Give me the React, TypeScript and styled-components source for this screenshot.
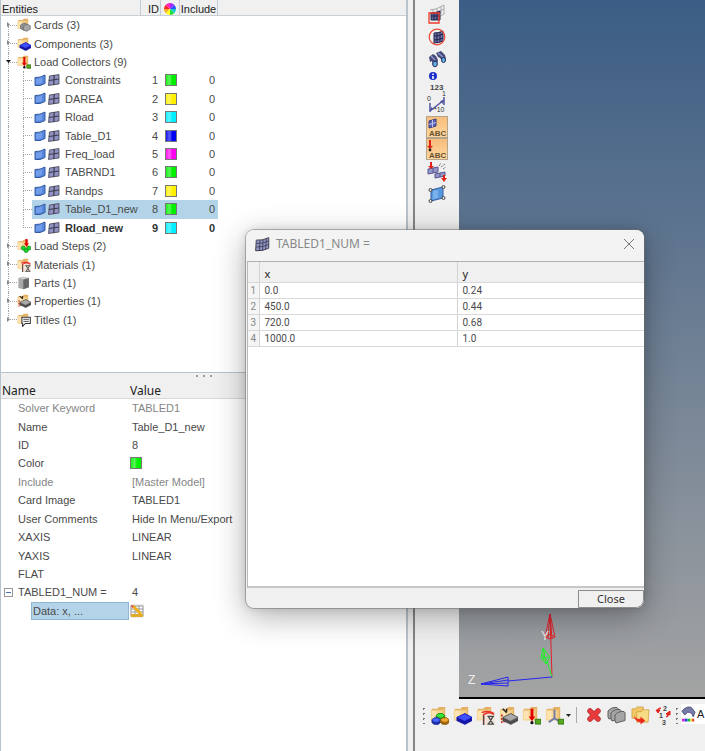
import React from "react";
import styled, { createGlobalStyle, css } from "styled-components";

const GlobalStyle = createGlobalStyle`
  *, *::before, *::after { box-sizing: border-box; }
  body { margin: 0; background: #f0f0f0; color: #4a4a4a; font: 11px/16px "Liberation Sans", Arial, sans-serif; }
  button, input { font: inherit; color: inherit; }
`;

const edge = "#b9c3cb";

/* ---------- window frame ---------- */
const Window = styled.div`
  position: relative;
  display: flex;
  min-height: 100vh;
  overflow: hidden;
`;
const Sidebar = styled.aside`
  flex: 0 0 408px;
  display: flex;
  flex-direction: column;
  border-left: 1px solid ${edge};
  border-right: 2px solid ${edge};
  background: #fff;
`;
const SplitBar = styled.div`
  flex: 0 0 7px;
  background: #f0f0f0;
  border-right: 2px solid #858585;
`;
const Main = styled.main`
  flex: 1;
  min-width: 0;
  display: flex;
  flex-direction: column;
`;
const Workspace = styled.div`
  flex: 1;
  display: flex;
`;

/* ---------- entity browser ---------- */
const EntityPanel = styled.section`
  flex: 0 0 373px;
  border-bottom: 1px solid ${edge};
`;
const EntityTable = styled.table`
  display: block;
  border-spacing: 0;
`;
const entityGrid = css`
  display: grid;
  grid-template-columns: 140px 20px 19px 38px 1fr;
`;
const EntityHead = styled.thead`
  display: block;
  background: #f0f0f0;
  border-bottom: 1px solid #c8cfd5;
`;
const EntityHeadRow = styled.tr`
  ${entityGrid}
  height: 15px;
`;
const HeadCell = styled.th<{ $align?: string }>`
  display: flex;
  align-items: center;
  justify-content: ${(p) => p.$align ?? "center"};
  padding: 2px 1px 0;
  border-right: 1px solid #c4ccd3;
  font-weight: 400;
  line-height: 14px;
  color: #222;
  &:last-child { border: 0; }
`;
const EntityBody = styled.tbody`
  display: grid;
  grid-auto-rows: 1fr;
  height: 313px;
`;
const EntityRow = styled.tr<{ $bold?: boolean }>`
  ${entityGrid}
  font-weight: ${(p) => (p.$bold ? 700 : 400)};
  color: ${(p) => (p.$bold ? "#333" : "#4a4a4a")};
`;
const NameCell = styled.td`
  display: flex;
  padding: 0;
  white-space: nowrap;
`;
const Guide = styled.span<{ $indent: number; $line: number }>`
  position: relative;
  flex: 0 0 ${(p) => p.$line}px;
  margin-left: ${(p) => p.$indent}px;
  display: flex;
  flex-direction: column;
`;
const Half = styled.span<{ $on: boolean; $arm?: boolean }>`
  flex: 1;
  border-left: 1px ${(p) => (p.$on ? "dotted" : "none")} #a4a4a4;
  border-bottom: ${(p) => (p.$arm ? "1px dotted #a4a4a4" : "none")};
`;
const Twisty = styled.svg`
  position: absolute;
  left: -2px;
  top: 6px;
  width: 5px;
  height: 5px;
`;
const Fill = styled.span<{ $selected?: boolean; $child?: boolean }>`
  flex: 1;
  display: flex;
  align-items: center;
  gap: ${(p) => (p.$child ? 2 : 3)}px;
  padding-left: ${(p) => (p.$child ? 2 : 0)}px;
  background: ${(p) => (p.$selected ? "#b3d4e8" : "transparent")};
`;
const Label = styled.span<{ $child?: boolean }>`
  padding-left: ${(p) => (p.$child ? 3 : 0)}px;
`;
const ValueCell = styled.td<{ $selected?: boolean }>`
  display: flex;
  align-items: center;
  justify-content: flex-end;
  padding: 0 3px 0 0;
  background: ${(p) => (p.$selected ? "#b3d4e8" : "transparent")};
`;
const Swatch = styled.span<{ $color: string }>`
  width: 12px;
  height: 12px;
  border: 1px solid #777;
  background: linear-gradient(90deg, rgba(255, 255, 255, 0.1), rgba(255, 255, 255, 0.35) 35%, rgba(255, 255, 255, 0) 65%), ${(p) => p.$color};
`;

/* ---------- property editor ---------- */
const Splitter = styled.div`
  flex: 0 0 10px;
  display: flex;
  justify-content: center;
  gap: 5px;
  padding-top: 2px;
  background: #f0f0f0;
`;
const Dot = styled.i`
  width: 2px;
  height: 2px;
  background: #999;
`;
const PropertyTable = styled.table`
  display: block;
  border-spacing: 0;
`;
const propertyGrid = css`
  display: grid;
  grid-template-columns: 128px 1fr;
`;
const PropertyHead = styled.thead`
  display: block;
  background: #f0f0f0;
  border-bottom: 1px solid #d8d8d8;
`;
const PropertyHeadRow = styled.tr`
  ${propertyGrid}
  height: 15px;
`;
const PropertyHeadCell = styled.th`
  padding: 0 1px;
  font: 400 12px/15px "Noto Sans", sans-serif;
  text-align: left;
  color: #222;
`;
const PropertyBody = styled.tbody`
  display: grid;
  grid-auto-rows: 1fr;
  height: 221px;
`;
const PropertyRow = styled.tr<{ $muted?: boolean }>`
  ${propertyGrid}
  color: ${(p) => (p.$muted ? "#858585" : "#4a4a4a")};
`;
const PropertyName = styled.th`
  display: flex;
  align-items: center;
  padding: 0 0 0 17px;
  font-weight: 400;
  white-space: nowrap;
`;
const PropertyValue = styled.td<{ $art?: boolean }>`
  display: flex;
  align-items: center;
  padding: 0 0 0 ${(p) => (p.$art ? 1 : 3)}px;
`;
const CollapseButton = styled.button`
  flex: 0 0 9px;
  height: 9px;
  display: grid;
  place-items: center;
  margin: 0 5px 0 -14px;
  padding: 0;
  border: 1px solid #999;
  background: #fff;
  &::after { content: ""; width: 5px; height: 1px; background: #4b6eaf; }
`;
const DataField = styled.span`
  flex: 1;
  align-self: stretch;
  display: flex;
  align-items: center;
  margin-left: 13px;
  padding-left: 1px;
  border: 1px solid #8fb7d3;
  background: #b3d4e8;
`;
const IconButton = styled.button`
  display: grid;
  place-items: center;
  padding: 0;
  border: 0;
  background: #ededed;
`;

/* ---------- tool bars and viewport ---------- */
const SideTools = styled.nav`
  flex: 0 0 44px;
  display: grid;
  grid-auto-rows: 1fr;
  justify-items: center;
  align-self: flex-start;
  height: 203px;
  margin-top: 3px;
`;
const ToolButton = styled.button<{ $active?: boolean }>`
  flex: 0 0 22px;
  display: grid;
  place-items: center;
  width: 22px;
  height: 22px;
  padding: 0;
  border: 1px solid ${(p) => (p.$active ? "#b5a48c" : "transparent")};
  background: ${(p) => (p.$active ? "linear-gradient(#f7bd7b, #fdd79e)" : "transparent")};
`;
const Viewport = styled.section`
  flex: 1;
  min-width: 0;
  display: flex;
  align-items: flex-end;
  border-bottom: 2px solid #000;
  background: linear-gradient(#3b5d85, #a3a3a3);
`;
const BottomTools = styled.nav`
  flex: 0 0 52px;
  display: flex;
  align-items: flex-start;
  padding: 5px 0 0 6px;
  overflow: hidden;
`;
const ToolGroup = styled.div<{ $gap: number }>`
  flex: none;
  display: flex;
  gap: ${(p) => p.$gap}px;
`;
const Grip = styled.span`
  flex: 0 0 5px;
  height: 18px;
  margin: 2px 2px 0 0;
  background: radial-gradient(circle, #777 1px, transparent 1px) 0 0 / 5px 5px;
`;
const Divider = styled.span`
  flex: 0 0 1px;
  height: 16px;
  margin: 3px 6px 0 5px;
  background: #aaa;
`;
const MenuArrow = styled.button`
  flex: 0 0 6px;
  display: grid;
  place-items: center;
  height: 22px;
  padding: 0;
  border: 0;
  background: none;
`;
const ModeButton = styled.button`
  flex: 1;
  display: flex;
  align-items: center;
  gap: 1px;
  height: 20px;
  padding: 0;
  border: 0;
  background: #fff;
  color: #222;
`;

/* ---------- dialog ---------- */
const Dialog = styled.div`
  position: absolute;
  left: 246px;
  top: 230px;
  width: 398px;
  display: flex;
  flex-direction: column;
  overflow: hidden;
  border-radius: 8px;
  background: #f0f0f0;
  box-shadow: 0 0 0 1px rgba(110, 110, 110, 0.5), 0 8px 32px rgba(0, 0, 0, 0.32), 0 0 10px rgba(0, 0, 0, 0.12);
`;
const TitleBar = styled.header`
  display: flex;
  align-items: center;
  gap: 6px;
  height: 31px;
  padding: 0 9px 3px;
  background: #f3f3f3;
  font: 12px/16px "Noto Sans", sans-serif;
  color: #888;
`;
const Title = styled.h1`
  flex: 1;
  margin: 0;
  font: inherit;
`;
const CloseIcon = styled.button`
  display: grid;
  padding: 0;
  border: 0;
  background: none;
`;
const SheetArea = styled.div`
  height: 327px;
  margin-left: 1px;
  border-top: 1px solid #b2b2b2;
  border-left: 1px solid #bbb;
  border-bottom: 2px solid #c6c6c6;
  background: #fff;
`;
const Sheet = styled.table`
  width: 100%;
  border-collapse: collapse;
  table-layout: fixed;
  font: 10px/15px Roboto, sans-serif;
  td, th { padding: 0 5px; border-right: 1px solid #d3d3d3; border-bottom: 1px solid #d9d9d9; text-align: left; font-weight: 400; }
  tr > :last-child { border-right: 0; }
  thead th { height: 20px; padding-top: 5px; background: #f0f0f0; color: #222; font: 11px/14px "Noto Sans", sans-serif; }
  tbody tr { height: 16px; }
  tbody th { padding: 0; background: #f5f5f5; color: #888; text-align: center; }
`;
const Footer = styled.footer`
  display: flex;
  justify-content: flex-end;
  padding-top: 2px;
`;
const CloseButton = styled.button`
  width: 66px;
  height: 18px;
  padding: 0;
  border: 1px solid #8c8c8c;
  border-radius: 0 0 8px 0;
  background: #f0f0f0;
  color: #333;
  font: 11px/14px "Noto Sans", sans-serif;
`;

/* ---------- drawings ---------- */
type Kind = "cards" | "component" | "load" | "step" | "material" | "part" | "property" | "title" | "assembly" | "system" | "export";

function Slab({ fill, dark }: { fill: string; dark: string }) {
  return (
    <g stroke={dark} strokeWidth=".6">
      <path d="M4 12 12.500 8 20 12v3.500L12.500 19.500 4 15.500z" fill={dark} />
      <path d="M4 12 12.500 8 20 12 12 16z" fill={fill} />
    </g>
  );
}

function Hex({ x, y, fill, dark }: { x: number; y: number; fill: string; dark: string }) {
  return (
    <g transform={`translate(${x} ${y})`} stroke={dark} strokeWidth=".7">
      <path d="M0 2 2.500 0h4L9 2v3L6.500 7h-4L0 5z" fill={dark} />
      <path d="M0 2 2.500 0h4L9 2 6.500 4.500h-4z" fill={fill} />
    </g>
  );
}

function FolderIcon({ kind, size = 14 }: { kind: Kind; size?: number }) {
  return (
    <svg width={size} height={size} viewBox="0 0 20 20" aria-hidden="true">
      {kind !== "part" && kind !== "export" && (
        <>
          <path d="M2 3h6l1.500-2H16v13H2z" fill="#e3b063" />
          <path d="M1 4h12l2-2v13H1z" fill="#f0c478" />
          <path d="M1 5h12v10H1z" fill="#f8d593" />
          <path d="M2 5h5v9H2z" fill="#fce8bb" opacity=".8" />
        </>
      )}
      {kind === "cards" && (
        <g fill="#a6a6a6" stroke="#555" strokeWidth=".8">
          <path d="m5 10 5-3 4 2v5l-5 3-4-2z" />
          <path d="m7 11 5-3 4 2v5l-5 3-4-2z" />
          <path d="m9 12 5-3 5 2v5l-5 3-5-2z" />
        </g>
      )}
      {kind === "component" && <Slab fill="#4050ff" dark="#1515a8" />}
      {kind === "load" && (
        <>
          <path d="M9 3h3v8h2l-3.500 5L7 11h2z" fill="#e00000" />
          <circle cx="10.500" cy="17.500" r="1.700" fill="#111" />
          <path d="M14 14h6v5h-6z" fill="#57a91f" stroke="#32730e" />
        </>
      )}
      {kind === "step" && (
        <>
          <g fill="#16d52b" stroke="#087815" strokeWidth=".8">
            <circle cx="9" cy="13" r="3" />
            <circle cx="17" cy="13" r="3" />
            <circle cx="13" cy="16.500" r="3" />
          </g>
          <path d="M12 0h3v6h2l-3.500 5-3.500-5h2z" fill="#e00000" />
        </>
      )}
      {kind === "material" && (
        <>
          <path d="M7 7h13v13H7z" fill="#efe5da" />
          <path d="M8 20V9q6-4 11 0M6 7q7-3 13 1" fill="none" stroke="#e5342a" strokeWidth="1.500" />
          <path d="M8 10v10M12 19h7M12 11h7M13 11l5 8M18 11l-5 8" fill="none" stroke="#494949" strokeWidth="1.300" />
        </>
      )}
      {kind === "part" && (
        <>
          <path d="m2 3 7-2 8 2v13l-8 3-7-2z" fill="#a7a7a7" />
          <path d="m9 4 8-1v13l-8 3z" fill="#666" />
          <path d="m2 3 7-2 8 2-8 2z" fill="#cdcdcd" />
        </>
      )}
      {kind === "property" && (
        <>
          <path d="M3 9v9M5.500 12v5" stroke="#d42a1e" strokeWidth="1.800" strokeDasharray="2 1.500" />
          <path d="m4 3 4 4M8 3v3" stroke="#222" strokeWidth="1.500" />
          <Slab fill="#aaa" dark="#4d4d4d" />
        </>
      )}
      {kind === "title" && (
        <>
          <path d="M7 6h12v9h-7l-4 4v-4H7z" fill="#fff" stroke="#333" strokeWidth="1.500" />
          <path d="M9 9h8M9 12h8" stroke="#333" strokeWidth="1.200" />
        </>
      )}
      {kind === "assembly" && (
        <>
          <Hex x={6.5} y={8} fill="#38e438" dark="#168a16" />
          <Hex x={2} y={12.5} fill="#4868ff" dark="#1c2ca4" />
          <Hex x={11} y={12.5} fill="#f1a62e" dark="#96600b" />
        </>
      )}
      {kind === "system" && (
        <>
          <path d="M10 4v9l-6 4M10 13l5 3" fill="none" stroke="#7179a6" strokeWidth="2" />
          <path d="M14 14h6v5h-6z" fill="#57a91f" stroke="#32730e" />
        </>
      )}
      {kind === "export" && (
        <>
          <path d="M1 3h4l1-2h7v12H1z" fill="#f2c766" stroke="#c9963a" strokeWidth=".7" />
          <path d="M6 6h5l1-2h7l-1 13H6z" fill="#f8dc85" stroke="#c9963a" strokeWidth=".7" />
          <path d="M3 10q2 4 7 3.500V11l5 4.500-5 4V17q-6 0-7-7z" fill="#e92b20" />
        </>
      )}
    </svg>
  );
}

const SheetIcon = () => (
  <svg width="12" height="13" viewBox="0 0 12 13" aria-hidden="true">
    <path d="M1 3.500q5 .5 10-2.500v8.500Q6 12.500 1 11.500z" fill="#5686dd" stroke="#345aa0" />
    <path d="M2 5q3 0 6-2v6q-3 1-6 1z" fill="#86aef0" opacity=".6" />
  </svg>
);

const MeshIcon = ({ size = 12, fine = false }: { size?: number; fine?: boolean }) => (
  <svg width={size} height={size} viewBox="0 0 12 12" aria-hidden="true">
    <path
      d={fine ? "M1 2.500Q6 3 11 .5v8.500Q6 11.500 .5 11z" : "M1.500 2 11 .5v9.500L.5 11.500z"}
      fill="#9091c4"
      stroke="#44444f"
      strokeWidth=".8"
    />
    <path
      d={fine ? "M4 2.500 3.500 11M6.500 2.200 6 10.700M9 1.500 8.500 10M1 5.200q5 .3 10-2M1 8q5 .3 10-2" : "M6.200 1 5.800 11M.8 6.500 11 5"}
      fill="none"
      stroke="#3a3a48"
      strokeWidth={fine ? 0.6 : 1.2}
    />
  </svg>
);

const ColorWheel = () => (
  <svg width="12" height="12" viewBox="-6 -6 12 12" aria-hidden="true">
    {["#f22", "#fa2", "#ff2", "#2d3", "#1cc", "#25f", "#a2f", "#f2b"].map((c, i) => (
      <path key={c} d="M0 0V-6A6 6 0 0 1 4.243-4.243z" fill={c} transform={`rotate(${270 - i * 45})`} />
    ))}
  </svg>
);

const EditTableIcon = () => (
  <svg width="14" height="14" viewBox="0 0 14 14" aria-hidden="true">
    <path d="M1 2h12v10H1z" fill="#fff" stroke="#999" />
    <path d="M1 5h12M1 8h12M5 2v10M9 2v10" stroke="#999" />
    <path d="M1 10h12v3H1z" fill="#dfab2b" />
    <path d="m3 2 8 8" stroke="#efb01e" strokeWidth="3" />
    <path d="m1 1 3 1-2 2z" fill="#df3f2f" />
  </svg>
);

const sideIcons: { name: string; active?: boolean; art: React.ReactNode }[] = [
  {
    name: "Mask elements",
    art: (
      <>
        <path d="M3 6q6 0 14-5v9l-5 3M6 6v4M10 4v6M14 3v7M3 9q8 0 14-4" fill="none" stroke="#aaa" />
        <path d="M4 9q5 0 9-2v9H4z" fill="#5d6298" stroke="#222448" />
        <path d="M7 9v7M10 8v8M4 12h9" stroke="#222448" />
        <path d="M2 9h10v10H2z" fill="none" stroke="#ef3b2c" strokeWidth="1.300" />
      </>
    ),
  },
  {
    name: "Spherical clipping",
    art: (
      <>
        <path d="M7 6q5 0 9-2v10q-4 2-9 2z" fill="#6a6fa8" stroke="#222448" />
        <path d="M10 6v10M13 5v10M7 9q5 0 9-2M7 13q5 0 9-2" fill="none" stroke="#222448" />
        <circle cx="10" cy="10" r="7.800" fill="none" stroke="#ef4b3c" strokeWidth="1.200" />
      </>
    ),
  },
  {
    name: "Find",
    art: (
      <>
        <path d="M2 8 6 5l3 2 2 4-1 5-4 1-1-5-2 1zM9 4l5-2 4 4 1 4-3 3-3-4-2-1z" fill="#454b78" />
        <path d="m4 7 4 4M11 4l5 4" stroke="#8d96cf" strokeWidth="1.500" />
        <ellipse cx="8" cy="15" rx="2.300" ry="2.800" fill="#63b1e8" stroke="#25305a" />
        <ellipse cx="16.500" cy="11" rx="2" ry="2.500" fill="#63b1e8" stroke="#25305a" />
      </>
    ),
  },
  {
    name: "Numbers",
    art: (
      <>
        <circle cx="6" cy="4" r="4" fill="#1d2fc8" />
        <path d="M6 1.500V3M6 4v3" stroke="#fff" strokeWidth="1.600" />
        <text x="3" y="18" fontSize="8" fontWeight="700" fill="#444">123</text>
      </>
    ),
  },
  {
    name: "Scale loads",
    art: (
      <>
        <path d="M3 9v9M17 3v8M3 17 17 6" fill="none" stroke="#5156a0" strokeWidth="1.500" />
        <path d="m3 17 1-4 3 2zM17 6l-4 1 3 3z" fill="#5156a0" />
        <text x="0" y="7" fontSize="7" fill="#333">0</text>
        <text x="15" y="2" fontSize="7" fill="#333">1</text>
        <text x="7" y="18" fontSize="7" fill="#333">*10</text>
      </>
    ),
  },
  {
    name: "Element handles",
    active: true,
    art: (
      <>
        <path d="m2 4 7-2v7l-7 2z" fill="#5c63b5" stroke="#363d87" />
        <path d="M5.500 3v7M2 7.500 9 5.500" stroke="#c0c5ef" />
        <text x="2" y="19" fontSize="8" fontWeight="700" fill="#665031">ABC</text>
      </>
    ),
  },
  {
    name: "Load handles",
    active: true,
    art: (
      <>
        <path d="M2 1h2v6h2l-3 3-3-3h2z" fill="#df2118" />
        <circle cx="3" cy="11" r="1.400" fill="#222" />
        <text x="2" y="19" fontSize="8" fontWeight="700" fill="#665031">ABC</text>
      </>
    ),
  },
  {
    name: "Load visualization",
    art: (
      <>
        <path d="m1 7 10-2v5L1 12zM8 12l10-2v4L8 16z" fill="#9496c8" stroke="#55578e" />
        <path d="M6 6v5M13 11v4" stroke="#55578e" />
        <path d="M3 0h2v4h2L4 7 1 4h2zM16 13h2v3h2l-3 4-3-4h2z" fill="#e2231a" />
        <path d="m12 4 2-3M14 5l4-3M16 7l3-2" stroke="#777" strokeDasharray="2 1" />
      </>
    ),
  },
  {
    name: "Shrink elements",
    art: (
      <>
        <path d="m4 6 12-3v11L4 17z" fill="#5797dd" stroke="#315b9f" />
        <path d="m6 7 5-1v8l-5 1z" fill="#87bdf1" opacity=".7" />
        <g fill="#eee" stroke="#444">
          <circle cx="3.500" cy="6" r="1.500" />
          <circle cx="16.500" cy="3" r="1.500" />
          <circle cx="16.500" cy="14" r="1.500" />
          <circle cx="3.500" cy="17" r="1.500" />
        </g>
      </>
    ),
  },
];

const DeleteArt = () => (
  <svg width="18" height="18" viewBox="0 0 18 18" aria-hidden="true">
    <path d="m5 5 8 8M13 5l-8 8" stroke="#b9393b" strokeWidth="5.500" strokeLinecap="round" />
    <path d="m5 5 8 8M13 5l-8 8" stroke="#e8393c" strokeWidth="4" strokeLinecap="round" />
  </svg>
);
const CardsArt = () => (
  <svg width="20" height="18" viewBox="0 0 20 18" aria-hidden="true">
    <g fill="#a5a5a5" stroke="#5f5f5f">
      <path d="M1 5q3-4 9-3.500l1 1v8L2 13l-1-2z" />
      <path d="M4 7q3-4 9-3.500l1 1v8L5 15l-1-2z" />
      <path d="M8 9q3-4 9-3.500l1 1v8L9 17l-1-2z" />
    </g>
  </svg>
);
const RenumberArt = () => (
  <svg width="18" height="20" viewBox="0 0 18 20" aria-hidden="true">
    <g fontSize="7" fontWeight="700" fill="#444">
      <text x="9" y="6">2</text>
      <text x="5" y="13">1</text>
      <text x="8" y="20">3</text>
    </g>
    <path d="M7 3Q3 3 4 6M2 5l2 3 2-3zM12 12q3 0 2-3M12 9l4-3v4z" fill="#e2231a" stroke="#e2231a" />
  </svg>
);
const ShadedArt = () => (
  <svg width="15" height="18" viewBox="0 0 16 18" aria-hidden="true">
    <path d="M1 6q5-6 10-4l4 5-2 5q-1-5-6-5l-3 3z" fill="#777ba8" stroke="#4d5077" />
    <path d="M1 14h3v3H1z" fill="#d22ad8" />
    <path d="M4 14h3v3H4z" fill="#263ee0" />
    <path d="M7 14h3v3H7z" fill="#20bd45" />
    <path d="M10 14h2v3h-2z" fill="#f2df22" />
    <path d="M12 14h2v3h-2z" fill="#e23322" />
  </svg>
);

/* ---------- data ---------- */
type Entity = { name: string; kind?: Kind; open?: boolean; id?: number; color?: string; last?: boolean; selected?: boolean; current?: boolean };

const entities: Entity[] = [
  { name: "Cards (3)", kind: "cards" },
  { name: "Components (3)", kind: "component" },
  { name: "Load Collectors (9)", kind: "load", open: true },
  { name: "Constraints", id: 1, color: "#00f000" },
  { name: "DAREA", id: 2, color: "#fff000" },
  { name: "Rload", id: 3, color: "#00f0ff" },
  { name: "Table_D1", id: 4, color: "#0000f0" },
  { name: "Freq_load", id: 5, color: "#ff00f0" },
  { name: "TABRND1", id: 6, color: "#00f000" },
  { name: "Randps", id: 7, color: "#fff000" },
  { name: "Table_D1_new", id: 8, color: "#00f000", selected: true },
  { name: "Rload_new", id: 9, color: "#00f0ff", current: true, last: true },
  { name: "Load Steps (2)", kind: "step" },
  { name: "Materials (1)", kind: "material" },
  { name: "Parts (1)", kind: "part" },
  { name: "Properties (1)", kind: "property" },
  { name: "Titles (1)", kind: "title" },
];

const properties: { name: string; value?: string; color?: string; muted?: boolean }[] = [
  { name: "Solver Keyword", value: "TABLED1", muted: true },
  { name: "Name", value: "Table_D1_new" },
  { name: "ID", value: "8" },
  { name: "Color", color: "#00f000" },
  { name: "Include", value: "[Master Model]", muted: true },
  { name: "Card Image", value: "TABLED1" },
  { name: "User Comments", value: "Hide In Menu/Export" },
  { name: "XAXIS", value: "LINEAR" },
  { name: "YAXIS", value: "LINEAR" },
  { name: "FLAT" },
];

const samples = [
  ["0.0", "0.24"],
  ["450.0", "0.44"],
  ["720.0", "0.68"],
  ["1000.0", "1.0"],
];

const createTools: { name: string; kind: Kind }[] = [
  { name: "Assemblies", kind: "assembly" },
  { name: "Components", kind: "component" },
  { name: "Materials", kind: "material" },
  { name: "Properties", kind: "property" },
  { name: "Load collectors", kind: "load" },
  { name: "Systems", kind: "system" },
];

/* ---------- parts ---------- */
function EntityLine({ item, first, end }: { item: Entity; first: boolean; end: boolean }) {
  const child = item.id !== undefined;
  return (
    <EntityRow $bold={item.current}>
      <NameCell>
        <Guide $indent={7} $line={child ? 15 : 9}>
          <Half $on={!first} $arm={!child} />
          <Half $on={!end} />
          {!child && (
            <Twisty viewBox="0 0 5 5" aria-hidden="true">
              <path d={item.open ? "M0 1h5L2.500 4z" : "M1 0v5l3-2.500z"} fill={item.open ? "#111" : "#888"} />
            </Twisty>
          )}
        </Guide>
        {child && (
          <Guide $indent={0} $line={9}>
            <Half $on $arm />
            <Half $on={!item.last} />
          </Guide>
        )}
        <Fill $child={child} $selected={item.selected}>
          {item.kind ? <FolderIcon kind={item.kind} /> : <><SheetIcon /><MeshIcon /></>}
          <Label $child={child}>{item.name}</Label>
        </Fill>
      </NameCell>
      <ValueCell $selected={item.selected}>{item.id}</ValueCell>
      <ValueCell $selected={item.selected}>{item.color && <Swatch $color={item.color} />}</ValueCell>
      <ValueCell $selected={item.selected}>{child ? 0 : null}</ValueCell>
    </EntityRow>
  );
}

export default function App() {
  return (
    <>
      <GlobalStyle />
      <Window>
        <Sidebar>
          <EntityPanel>
            <EntityTable>
              <EntityHead>
                <EntityHeadRow>
                  <HeadCell $align="flex-start">Entities</HeadCell>
                  <HeadCell $align="flex-end">ID</HeadCell>
                  <HeadCell aria-label="Color"><ColorWheel /></HeadCell>
                  <HeadCell>Include</HeadCell>
                  <HeadCell as="td" />
                </EntityHeadRow>
              </EntityHead>
              <EntityBody>
                {entities.map((item, i) => (
                  <EntityLine key={item.name} item={item} first={i === 0} end={i === entities.length - 1} />
                ))}
              </EntityBody>
            </EntityTable>
          </EntityPanel>
          <Splitter><Dot /><Dot /><Dot /></Splitter>
          <PropertyTable>
            <PropertyHead>
              <PropertyHeadRow>
                <PropertyHeadCell>Name</PropertyHeadCell>
                <PropertyHeadCell>Value</PropertyHeadCell>
              </PropertyHeadRow>
            </PropertyHead>
            <PropertyBody>
              {properties.map((p) => (
                <PropertyRow key={p.name} $muted={p.muted}>
                  <PropertyName>{p.name}</PropertyName>
                  <PropertyValue $art={!!p.color}>{p.color ? <Swatch $color={p.color} /> : p.value}</PropertyValue>
                </PropertyRow>
              ))}
              <PropertyRow>
                <PropertyName><CollapseButton aria-label="Collapse TABLED1_NUM" />TABLED1_NUM =</PropertyName>
                <PropertyValue>4</PropertyValue>
              </PropertyRow>
              <PropertyRow>
                <PropertyName><DataField>Data: x, ...</DataField></PropertyName>
                <PropertyValue $art><IconButton aria-label="Edit table"><EditTableIcon /></IconButton></PropertyValue>
              </PropertyRow>
            </PropertyBody>
          </PropertyTable>
        </Sidebar>
        <SplitBar />
        <Main>
          <Workspace>
            <SideTools aria-label="Display">
              {sideIcons.map((t) => (
                <ToolButton key={t.name} $active={t.active} aria-label={t.name}>
                  <svg width="20" height="20" viewBox="0 0 20 20" overflow="visible" aria-hidden="true">{t.art}</svg>
                </ToolButton>
              ))}
            </SideTools>
            <Viewport aria-label="Model view">
              <svg width="110" height="90" viewBox="0 0 110 90" aria-hidden="true">
                <g fill="none" strokeWidth="1">
                  <path d="M93 70 91 8M91 7l-5 23 5 2 5-2zM91 7l-2 24M91 7l2 25M86 30l5-3 5 3" stroke="#e0222c" />
                  <path d="M93 70 88 54M84 41l-2 10 5 6 4-7zM84 41l3 16M82 51l9-1M82 47l7 7M86 44l-2 9" stroke="#25ee2b" />
                  <path d="M93 70 49 74M22 77l27-7v9zM22 77l27-4M22 77l27-1" stroke="#2626ef" />
                </g>
                <text x="82" y="33" fontSize="12" fill="#eee">Y</text>
                <text x="9" y="77" fontSize="12" fill="#eee">Z</text>
              </svg>
            </Viewport>
          </Workspace>
          <BottomTools aria-label="Model tools">
            <Grip />
            <ToolGroup $gap={1}>
              {createTools.map((t) => (
                <ToolButton key={t.name} aria-label={t.name}><FolderIcon kind={t.kind} size={19} /></ToolButton>
              ))}
            </ToolGroup>
            <MenuArrow aria-label="More entities">
              <svg width="5" height="3" viewBox="0 0 5 3"><path d="M0 0h5L2.500 3z" fill="#222" /></svg>
            </MenuArrow>
            <Divider />
            <ToolGroup $gap={1}>
              <ToolButton aria-label="Delete"><DeleteArt /></ToolButton>
              <ToolButton aria-label="Card edit"><CardsArt /></ToolButton>
              <ToolButton aria-label="Organize"><FolderIcon kind="export" size={19} /></ToolButton>
              <ToolButton aria-label="Renumber"><RenumberArt /></ToolButton>
            </ToolGroup>
            <Grip />
            <ModeButton aria-label="Color mode"><ShadedArt />A</ModeButton>
          </BottomTools>
        </Main>
        <Dialog role="dialog" aria-labelledby="dialog-title">
          <TitleBar>
            <MeshIcon size={15} fine />
            <Title id="dialog-title">TABLED1_NUM =</Title>
            <CloseIcon aria-label="Close window">
              <svg width="12" height="12" viewBox="0 0 12 12"><path d="m1 1 10 10M11 1 1 11" stroke="#777" /></svg>
            </CloseIcon>
          </TitleBar>
          <SheetArea>
            <Sheet>
              <colgroup>
                <col width="11" />
                <col width="198" />
                <col />
              </colgroup>
              <thead>
                <tr><th aria-label="Row" /><th>x</th><th>y</th></tr>
              </thead>
              <tbody>
                {samples.map(([x, y], i) => (
                  <tr key={x}><th>{i + 1}</th><td>{x}</td><td>{y}</td></tr>
                ))}
              </tbody>
            </Sheet>
          </SheetArea>
          <Footer><CloseButton>Close</CloseButton></Footer>
        </Dialog>
      </Window>
    </>
  );
}
